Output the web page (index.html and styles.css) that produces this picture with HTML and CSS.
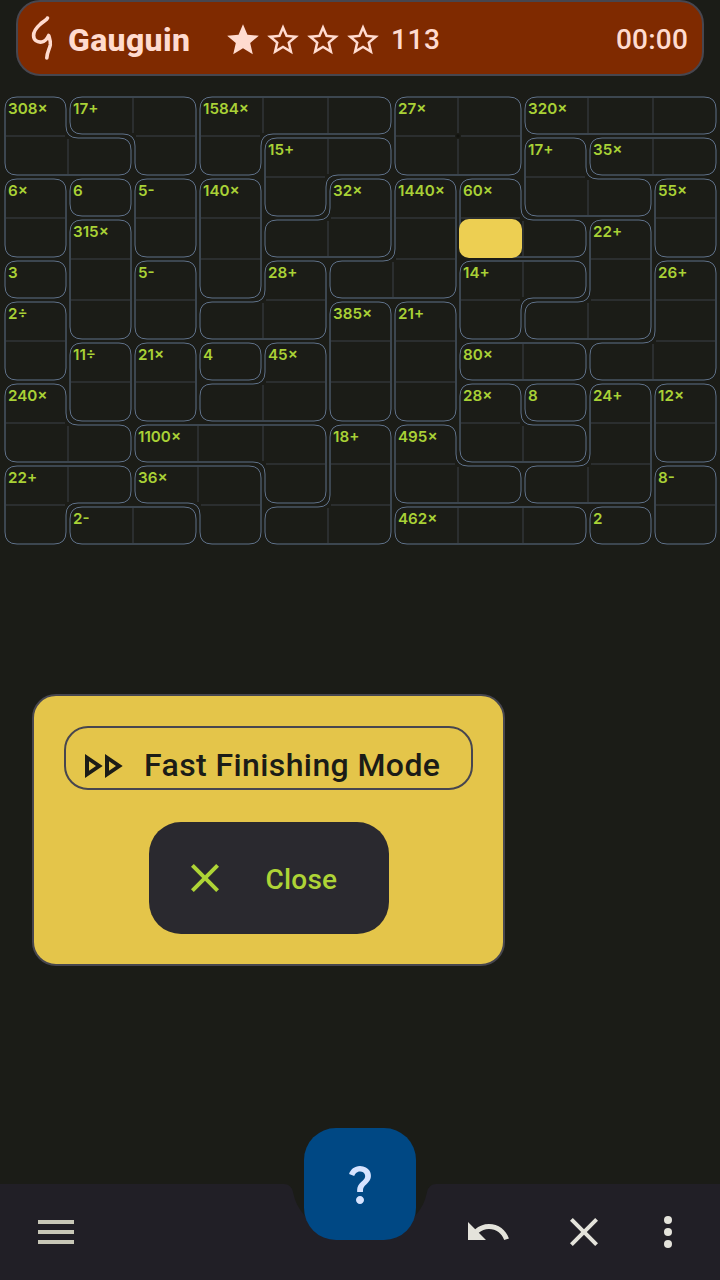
FILE: index.html
```html
<!DOCTYPE html>
<html lang="en">
<head>
<meta charset="utf-8">
<title>Gauguin</title>
<link rel="stylesheet" href="styles.css">
</head>
<body>
<header class="topbar">
  <svg class="logo" viewBox="0 0 24 48"><path d="M17.500 4C17 6 13 7.500 10 10.500C6 14 3.600 17.500 3.600 21.500C3.600 26 7 28.600 11.700 28C15 27.500 17.500 24 18.700 21.500C19.500 24.500 20.800 26.500 20.300 31C19.500 35 17 38 16.800 44"/></svg>
  <h1 class="title">Gauguin</h1>
  <div class="rating">
    <svg class="star" viewBox="0 0 24 24"><path d="M12 17.270 18.180 21l-1.640-7.030L22 9.240l-7.190-.610L12 2 9.190 8.630 2 9.240l5.460 4.730L5.820 21z"/></svg>
    <svg class="star" viewBox="0 0 24 24"><path d="M22 9.240l-7.190-.620L12 2 9.190 8.630 2 9.240l5.460 4.730L5.820 21 12 17.270 18.180 21l-1.630-7.030L22 9.240zM12 15.400l-3.760 2.270 1-4.280-3.320-2.880 4.380-.380L12 6.100l1.710 4.040 4.380.380-3.320 2.880 1 4.280L12 15.400z"/></svg>
    <svg class="star" viewBox="0 0 24 24"><path d="M22 9.240l-7.190-.620L12 2 9.190 8.630 2 9.240l5.460 4.730L5.820 21 12 17.270 18.180 21l-1.630-7.030L22 9.240zM12 15.400l-3.760 2.270 1-4.280-3.320-2.880 4.380-.380L12 6.100l1.710 4.040 4.380.380-3.320 2.880 1 4.280L12 15.400z"/></svg>
    <svg class="star" viewBox="0 0 24 24"><path d="M22 9.240l-7.190-.620L12 2 9.190 8.630 2 9.240l5.460 4.730L5.820 21 12 17.270 18.180 21l-1.630-7.030L22 9.240zM12 15.400l-3.760 2.270 1-4.280-3.320-2.880 4.380-.380L12 6.100l1.710 4.040 4.380.380-3.320 2.880 1 4.280L12 15.400z"/></svg>
  </div>
  <span class="score">113</span>
  <span class="timer">00:00</span>
</header>

<main class="content">
  <svg class="board" id="board" viewBox="0 0 720 456"></svg>
  <section class="dialog">
    <div class="mode">
      <svg class="ff" viewBox="0 0 38 24"><path fill-rule="evenodd" d="M0 0L17.700 12L0 24ZM4 7.300V16.700L11 12ZM20 0L37.700 12L20 24ZM24 7.300V16.700L31 12Z"/></svg>
      <span class="mode-text">Fast Finishing Mode</span>
    </div>
    <button class="close">
      <svg class="icon" viewBox="0 0 24 24"><path d="M19 6.410 17.590 5 12 10.590 6.410 5 5 6.410 10.590 12 5 17.590 6.410 19 12 13.410 17.590 19 19 17.590 13.410 12z"/></svg>
      <span class="close-text">Close</span>
    </button>
  </section>
</main>

<footer class="bottombar">
  <svg class="bar-shape" viewBox="0 0 720 96"><path d="M0 0H284Q291 0 293 8C295 18 299 25 305 32C330 60 390 60 415 32C421 25 425 18 427 8Q429 0 436 0H720V96H0Z"/></svg>
  <button class="fab"><svg class="icon" viewBox="0 0 24 24"><path d="M11.070 12.850c.770-1.390 2.250-2.210 3.110-3.440.910-1.290.400-3.700-2.180-3.700-1.690 0-2.520 1.280-2.870 2.340L6.540 6.960C7.250 4.830 9.180 3 11.990 3c2.350 0 3.960 1.070 4.780 2.410.700 1.150 1.110 3.300.030 4.900-1.200 1.770-2.350 2.310-2.970 3.450-.250.460-.350.760-.350 2.240h-2.890c-.010-.780-.130-2.050.480-3.150zM14 20c0 1.100-.900 2-2 2s-2-.900-2-2 .900-2 2-2 2 .900 2 2z"/></svg></button>
  <nav class="actions">
    <svg class="icon menu" viewBox="0 0 24 24"><path d="M3 18h18v-2H3v2zm0-5h18v-2H3v2zm0-7v2h18V6H3z"/></svg>
    <svg class="icon undo" viewBox="0 0 24 24"><path d="M12.500 8c-2.650 0-5.050.990-6.900 2.600L2 7v9h9l-3.620-3.620c1.390-1.160 3.160-1.880 5.120-1.880 3.540 0 6.550 2.310 7.600 5.500l2.370-.780C21.080 11.030 17.150 8 12.500 8z"/></svg>
    <svg class="icon cancel" viewBox="0 0 24 24"><path d="M19 6.410 17.590 5 12 10.590 6.410 5 5 6.410 10.590 12 5 17.590 6.410 19 12 13.410 17.590 19 19 17.590 13.410 12z"/></svg>
    <svg class="icon more" viewBox="0 0 24 24"><circle cx="12" cy="6" r="2"/><circle cx="12" cy="12" r="2"/><circle cx="12" cy="18" r="2"/></svg>
  </nav>
</footer>
<script src="board.js"></script>
</body>
</html>
```

FILE: styles.css
```css
* { box-sizing: border-box; }
body {
  margin: 0;
  width: 720px;
  height: 1280px;
  overflow: hidden;
  display: flex;
  flex-direction: column;
  background: #1b1c17;
  font-family: Roboto, "Noto Sans", sans-serif;
}
svg { display: block; flex: none; }
button { border: 0; padding: 0; font: inherit; }

.topbar {
  display: flex;
  align-items: center;
  height: 76px;
  margin: 0 16px;
  padding: 0 14px 0 12px;
  border: 2px solid #47464f;
  border-radius: 24px;
  background: #7f2a00;
  color: #ffdbcf;
  font-size: 28px;
  font-weight: 500;
}
.logo { width: 24px; height: 48px; fill: none; stroke: #ffdbcf; stroke-width: 3.600px; stroke-linecap: round; stroke-linejoin: round; }
.title { margin: 4px 0 0 14px; width: 156px; font-size: 32px; font-weight: 800; line-height: 40px; letter-spacing: 0.350px; }
.rating { display: flex; gap: 2px; margin-top: 3px; }
.star { width: 38px; height: 38px; fill: #ffdbcf; }
.score { margin: 2px 0 0 9px; letter-spacing: 0.600px; }
.timer { margin: 2px 0 0 auto; letter-spacing: 0.200px; }

.content { flex: 1; display: flex; flex-direction: column; align-items: flex-start; padding-top: 14px; }
.board { width: 720px; height: 456px; }
.cage { fill: none; stroke: #5f7189; stroke-width: 1px; }
.line { stroke: #2b2e2f; stroke-width: 2px; }
.knot { fill: #12130f; }
.selected { fill: #edcf52; }
.hint { font: 600 15.200px Inter, sans-serif; fill: #a9d136; }

.dialog {
  display: flex;
  flex-direction: column;
  align-items: center;
  gap: 32px;
  width: 473px;
  height: 272px;
  margin: 148px 0 0 32px;
  padding-top: 30px;
  border: 2px solid #47464f;
  border-radius: 24px;
  background: #e4c54a;
}
.mode {
  display: flex;
  align-items: center;
  width: 409px;
  height: 64px;
  padding: 14px 0 0 19px;
  border: 2px solid #47464f;
  border-radius: 24px;
  color: #1b1c17;
}
.ff { width: 38px; height: 24px; margin-top: 2px; fill: #1b1c17; }
.mode-text { margin-left: 21px; font-size: 32px; font-weight: 500; line-height: 38px; letter-spacing: 0.400px; white-space: nowrap; }
.close {
  display: flex;
  align-items: center;
  width: 240px;
  height: 112px;
  padding-left: 32px;
  border-radius: 32px;
  background: #2a292f;
  color: #aed436;
}
.icon { width: 48px; height: 48px; fill: currentColor; }
.close-text { margin: 2px 0 0 37px; font-size: 28px; font-weight: 500; letter-spacing: 0.200px; }

.bottombar { position: relative; height: 96px; color: #e4e3db; }
.bar-shape { position: absolute; inset: 0; width: 720px; height: 96px; fill: #211f26; }
.fab {
  position: absolute;
  left: 304px;
  top: -56px;
  display: grid;
  place-items: center;
  width: 112px;
  height: 112px;
  border-radius: 32px;
  background: #004884;
  color: #d6e3ff;
}
.actions { position: relative; display: flex; align-items: center; height: 96px; padding: 0 28px 0 32px; }
.menu { color: #c8c7b7; margin-right: auto; }
.undo { margin-right: 48px; }
.cancel { margin-right: 36px; }
```

FILE: board.js
```js
const rows = [
  'ABBCCCDDEEE',
  'AABCFFDDGHH',
  'IJKLFMNOGGP',
  'IQKLMMNOORP',
  'SQTLUNNVVRW',
  'XQTUUYZVRRW',
  'XabcdYZeeWW',
  'fabddYZghij',
  'ffkkklmggij',
  'nnooklmmiip',
  'nqqollrrrsp'
];
const hints = {
  A: '308×', B: '17+', C: '1584×', D: '27×', E: '320×', F: '15+', G: '17+', H: '35×',
  I: '6×', J: '6', K: '5-', L: '140×', M: '32×', N: '1440×', O: '60×', P: '55×',
  Q: '315×', R: '22+', S: '3', T: '5-', U: '28+', V: '14+', W: '26+', X: '2÷',
  Y: '385×', Z: '21+', a: '11÷', b: '21×', c: '4', d: '45×', e: '80×', f: '240×',
  g: '28×', h: '8', i: '24+', j: '12×', k: '1100×', l: '18+', m: '495×', n: '22+',
  o: '36×', p: '8-', q: '2-', r: '462×', s: '2'
};
const W = 65, H = 41, OX = 3, OY = 5, INSET = 2, RADIUS = 12;
const at = (r, c) => (rows[r] || '')[c];

// Walks the border of a cage clockwise and returns its inset corner points.
function outline(id) {
  const edges = new Map();
  const add = (x, y, dx, dy) => edges.set(x + ',' + y, { x, y, dx, dy });
  for (let r = 0; r < 11; r++) for (let c = 0; c < 11; c++) {
    if (at(r, c) !== id) continue;
    if (at(r - 1, c) !== id) add(c, r, 1, 0);
    if (at(r, c + 1) !== id) add(c + 1, r, 0, 1);
    if (at(r + 1, c) !== id) add(c + 1, r + 1, -1, 0);
    if (at(r, c - 1) !== id) add(c, r + 1, 0, -1);
  }
  const start = edges.values().next().value;
  const points = [];
  let edge = start;
  do {
    const next = edges.get((edge.x + edge.dx) + ',' + (edge.y + edge.dy));
    if (next.dx !== edge.dx || next.dy !== edge.dy) {
      points.push([
        OX + next.x * W - INSET * (edge.dy + next.dy),
        OY + next.y * H + INSET * (edge.dx + next.dx)
      ]);
    }
    edge = next;
  } while (edge !== start);
  return points;
}

function roundedPath(points) {
  const toward = (a, b) => {
    const t = RADIUS / Math.hypot(b[0] - a[0], b[1] - a[1]);
    return [a[0] + (b[0] - a[0]) * t, a[1] + (b[1] - a[1]) * t];
  };
  return points.map((p, i) => {
    const prev = points[(i + points.length - 1) % points.length];
    const next = points[(i + 1) % points.length];
    return (i ? 'L' : 'M') + toward(p, prev) + 'Q' + p + ' ' + toward(p, next);
  }).join('') + 'Z';
}

let lines = '', cages = '', labels = '';
const seen = new Set();
for (let r = 0; r < 11; r++) for (let c = 0; c < 11; c++) {
  const id = at(r, c), x = OX + c * W, y = OY + r * H;
  if (at(r, c + 1) === id) lines += `<path class="line" d="M${x + W} ${y + 3}V${y + H - 3}"/>`;
  if (at(r + 1, c) === id) lines += `<path class="line" d="M${x + 3} ${y + H}H${x + W - 3}"/>`;
  if (!seen.has(id)) {
    seen.add(id);
    cages += `<path class="cage" d="${roundedPath(outline(id))}"/>`;
    labels += `<text class="hint" x="${x + 5}" y="${y + 19}">${hints[id]}</text>`;
  }
}
document.getElementById('board').innerHTML = lines +
  '<rect class="knot" x="456.500" y="44.500" width="3" height="3"/>' + cages +
  '<rect class="selected" x="459" y="129" width="63" height="39" rx="10"/>' + labels;
```
